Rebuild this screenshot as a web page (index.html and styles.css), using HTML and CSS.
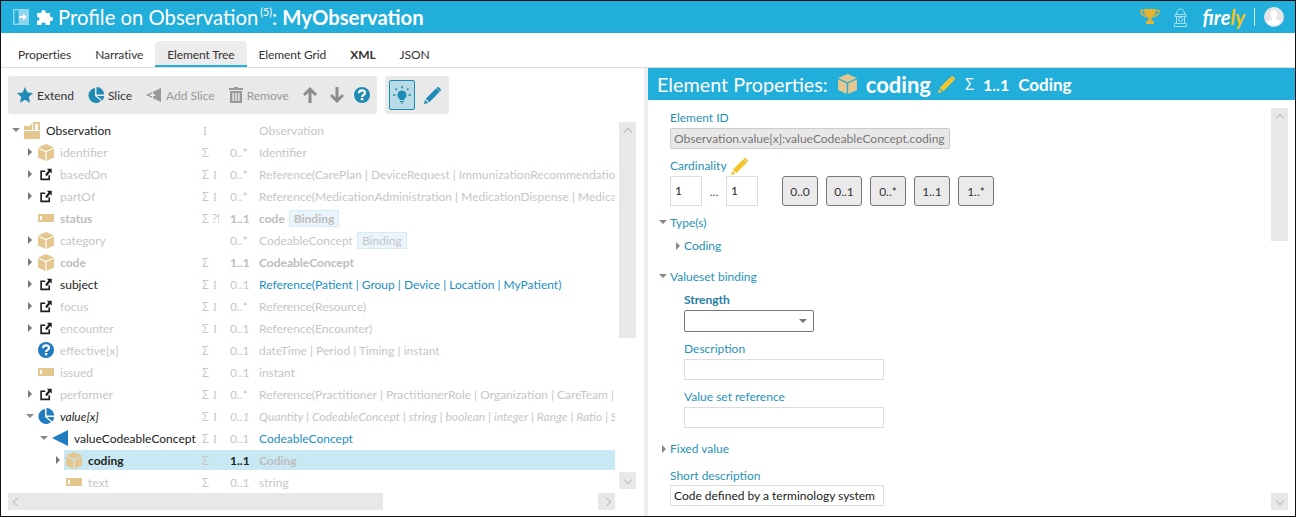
FILE: index.html
```html
<!doctype html>
<html>
<head>
	<meta name="viewport" content="width=device-width, initial-scale=1.0">
	<title>Profile on Observation: MyObservation</title>
	<link rel="stylesheet" href="styles.css">
</head>
<body>

<svg class="defs" width="0" height="0">
	<symbol id="i-box" viewBox="0 0 16 17">
		<path fill="#e3c78f" d="M8 0l8 3.4L8 7 0 3.4z"/>
		<path fill="#e3c78f" d="M0 4.6l7.4 3.3V17L0 13.6z"/>
		<path fill="#e3c78f" d="M16 4.6L8.6 7.9V17l7.4-3.4z"/>
	</symbol>
	<symbol id="i-bar" viewBox="0 0 16 8">
		<path fill="#e3c78f" d="M0 0h16v8H0z"/>
		<path fill="#fff" d="M2 2h2v4H2z"/>
	</symbol>
	<symbol id="i-ref" viewBox="0 0 16 16">
		<path fill="none" stroke="#1c1c1c" stroke-width="2" d="M7 4H2v10h10V9"/>
		<path fill="#1c1c1c" d="M9 1h6v6l-2-2-4 5-2-2 4-5z"/>
	</symbol>
	<symbol id="i-folder" viewBox="0 0 16 17">
		<path fill="#e3c78f" d="M0 4h6l1-2h1v6H0zM0 9h16v8H0z"/>
		<path fill="#e3c78f" d="M9 0h7v8h-2V2h-3v6H9z"/>
	</symbol>
	<symbol id="i-help" viewBox="0 0 16 16">
		<circle cx="8" cy="8" r="8" fill="currentColor"/>
		<path fill="none" stroke="#fff" stroke-width="2.2" d="M5 6.2C5 4.4 6.3 3.4 8 3.4s3 1 3 2.5c0 2-3 2-3 4.2"/>
		<path fill="#fff" d="M6.8 11h2.5v2.3H6.8z"/>
	</symbol>
	<symbol id="i-pie" viewBox="0 0 16 16">
		<path fill="currentColor" d="M7 1v8l6 5A7.5 7.5 0 1 1 7 1z"/>
		<path fill="currentColor" d="M8.5 0A7.5 7.5 0 0 1 16 7.5H8.5z"/>
		<path fill="currentColor" d="M9 9h7c0 1.700-.6 3.300-1.700 4.500z"/>
	</symbol>
	<symbol id="i-slice" viewBox="0 0 16 16">
		<path fill="currentColor" d="M16 0v16L0 8z"/>
	</symbol>
	<symbol id="i-pencil" viewBox="0 0 16 16">
		<path fill="currentColor" d="M11.500 1.200l3.300 3.300L5 14.300 1.700 11zM0 16l1-4 3 3z"/>
		<path fill="currentColor" d="M12.400.4c.6-.5 1.300-.5 1.800 0l1.400 1.400c.5.5.5 1.200 0 1.800l-.6.6-3.200-3.200z"/>
	</symbol>
</svg>

<div class="window">

	<header class="topbar">
		<svg class="top-panel" viewBox="0 0 16 16" width="16" height="16">
			<path fill="#8fd6ec" d="M0 0h16v16H0z"/>
			<path fill="#22aedb" d="M1.500 1.500h4v13h-4z"/>
			<path fill="#fff" d="M6 7h4V4.500L14 8l-4 3.500V9H6z"/>
		</svg>
		<svg class="top-puzzle" viewBox="0 0 16 16" width="16" height="16">
			<path fill="#fff" d="M0 4h4.500C4 2.500 5 1 6.500 1S9 2.500 8.500 4H13v4c1.500-.5 3 .3 3 2s-1.500 2.500-3 2v4H8.500c.5-1.500-.5-2.500-2-2.500s-2.500 1-2 2.500H0v-4.500c1.500.5 2.500-.5 2.500-1.500S1.500 7.500 0 8z"/>
		</svg>
		<h1 class="title">Profile on Observation<sup>(5)</sup>: <b>MyObservation</b></h1>
		<div class="top-right">
			<svg viewBox="0 0 20 16" width="20" height="16">
				<path fill="none" stroke="#e6b32e" stroke-width="1.500" d="M4 1.500H1c0 3 1 5 5 6M16 1.500h3c0 3-1 5-5 6"/>
				<path fill="#e6b32e" d="M4 0h12c0 5-2 8-4.500 9v3H14v3H6v-3h2.500V9C6 8 4 5 4 0z"/>
			</svg>
			<svg class="hydrant" viewBox="0 0 15 20" width="15" height="20">
				<path fill="none" stroke="#a6dff0" d="M3.500 7c0-3 1.500-5 4-5s4 2 4 5M2 7.500h11v2H2zM3.500 9.500h8v7h-8zM1.500 16.500h12v3h-12z"/>
				<circle cx="7.500" cy="12.500" r="2" fill="none" stroke="#a6dff0"/>
			</svg>
			<span class="firely">fire<i>ly</i></span>
			<span class="top-sep"></span>
			<svg viewBox="0 0 20 20" width="20" height="20">
				<circle cx="10" cy="10" r="10" fill="#e6e6e6"/>
				<path fill="#fff" d="M10 3c2.300 0 3.500 1.800 3.500 4 0 1.800-.7 3.200-1.500 4v1.500c2 .7 4 1.500 5 3A10 10 0 0 1 3 15.500c1-1.500 3-2.300 5-3V11c-.8-.8-1.500-2.200-1.500-4 0-2.200 1.200-4 3.500-4z"/>
			</svg>
		</div>
	</header>

	<nav class="tabs">
		<a class="tab">Properties</a>
		<a class="tab">Narrative</a>
		<a class="tab active">Element Tree</a>
		<a class="tab">Element Grid</a>
		<a class="tab strong">XML</a>
		<a class="tab">JSON</a>
	</nav>

	<div class="panes">

		<section class="pane-left">
			<div class="toolbars">
				<div class="toolbar main-tools">
					<span class="tool"><svg width="16" height="16" viewBox="0 0 16 16"><path fill="#1f8ab3" d="M8 0l2.400 5.400 5.600.6-4.200 3.900 1.200 5.800L8 12.800l-5 2.900 1.200-5.800L0 6l5.600-.6z"/></svg>Extend</span>
					<span class="tool"><svg class="blue" width="16" height="16"><use href="#i-pie"/></svg>Slice</span>
					<span class="tool off"><svg width="16" height="16" viewBox="0 0 16 16"><path fill="#999" d="M15 1v14L0 8z"/><path fill="#e9e9e9" d="M9 7H7V5H6v2H4v2h2v2h1V9h2z"/></svg>Add Slice</span>
					<span class="tool off"><svg width="14" height="16" viewBox="0 0 14 16"><path fill="#999" d="M5 0h4v1h5v2H0V1h5zM1 4h12v12H1zM3.500 6v8h1.500V6zM6.300 6v8h1.500V6zM9 6v8h1.500V6z" fill-rule="evenodd"/></svg>Remove</span>
					<svg class="move" width="14" height="16" viewBox="0 0 14 16"><path fill="#8c8c8c" d="M7 0l7 7-2 2-3.500-3.500V16h-3V5.500L2 9 0 7z"/></svg>
					<svg class="move" width="14" height="16" viewBox="0 0 14 16"><path fill="#8c8c8c" d="M7 16L0 9l2-2 3.500 3.500V0h3v10.500L12 7l2 2z"/></svg>
					<svg class="move blue" width="16" height="16"><use href="#i-help"/></svg>
				</div>
				<div class="toolbar side-tools">
					<span class="toggle">
						<svg width="18" height="18" viewBox="0 0 18 18">
							<path fill="none" stroke="#1f8ab3" stroke-width="1.500" d="M9 0v2.500M2.500 2.500l1.500 1.500M15.500 2.500L14 4M0 9h2.500M15.500 9H18"/>
							<path fill="#1f8ab3" d="M9 4.500a4.500 4.500 0 0 1 2.500 8.200V14h-5v-1.300A4.500 4.500 0 0 1 9 4.500zM7 15h4v1H7zM8 16.500h2v1H8z"/>
						</svg>
					</span>
					<svg class="blue" width="17" height="17"><use href="#i-pencil"/></svg>
				</div>
			</div>

			<div class="tree-wrap">
				<div class="tree">
					<div class="row dark">
						<span class="name" style="padding-left: 0"><span class="arr down"></span><svg class="ico" height="17"><use href="#i-folder"/></svg><span>Observation</span></span>
						<span class="flags"><em>I</em></span><span class="card"></span><span class="type">Observation</span>
					</div>
					<div class="row">
						<span class="name" style="padding-left: 14px"><span class="arr closed"></span><svg class="ico" height="17"><use href="#i-box"/></svg><span>identifier</span></span>
						<span class="flags">&Sigma;</span><span class="card">0..*</span><span class="type">Identifier</span>
					</div>
					<div class="row">
						<span class="name" style="padding-left: 14px"><span class="arr closed"></span><svg class="ico" height="13"><use href="#i-ref"/></svg><span>basedOn</span></span>
						<span class="flags">&Sigma; <em>I</em></span><span class="card">0..*</span><span class="type">Reference(CarePlan | DeviceRequest | ImmunizationRecommendation | MedicationRequest)</span>
					</div>
					<div class="row">
						<span class="name" style="padding-left: 14px"><span class="arr closed"></span><svg class="ico" height="13"><use href="#i-ref"/></svg><span>partOf</span></span>
						<span class="flags">&Sigma; <em>I</em></span><span class="card">0..*</span><span class="type">Reference(MedicationAdministration | MedicationDispense | MedicationStatement)</span>
					</div>
					<div class="row bold">
						<span class="name" style="padding-left: 14px"><span class="arr"></span><svg class="ico" height="8"><use href="#i-bar"/></svg><span>status</span></span>
						<span class="flags">&Sigma; ?!</span><span class="card">1..1</span><span class="type">code <span class="badge">Binding</span></span>
					</div>
					<div class="row">
						<span class="name" style="padding-left: 14px"><span class="arr closed"></span><svg class="ico" height="17"><use href="#i-box"/></svg><span>category</span></span>
						<span class="flags"></span><span class="card">0..*</span><span class="type">CodeableConcept <span class="badge">Binding</span></span>
					</div>
					<div class="row bold">
						<span class="name" style="padding-left: 14px"><span class="arr closed"></span><svg class="ico" height="17"><use href="#i-box"/></svg><span>code</span></span>
						<span class="flags">&Sigma;</span><span class="card">1..1</span><span class="type">CodeableConcept</span>
					</div>
					<div class="row dark">
						<span class="name" style="padding-left: 14px"><span class="arr closed"></span><svg class="ico" height="13"><use href="#i-ref"/></svg><span>subject</span></span>
						<span class="flags">&Sigma; <em>I</em></span><span class="card">0..1</span><span class="type link">Reference(Patient | Group | Device | Location | MyPatient)</span>
					</div>
					<div class="row">
						<span class="name" style="padding-left: 14px"><span class="arr closed"></span><svg class="ico" height="13"><use href="#i-ref"/></svg><span>focus</span></span>
						<span class="flags">&Sigma; <em>I</em></span><span class="card">0..*</span><span class="type">Reference(Resource)</span>
					</div>
					<div class="row">
						<span class="name" style="padding-left: 14px"><span class="arr closed"></span><svg class="ico" height="13"><use href="#i-ref"/></svg><span>encounter</span></span>
						<span class="flags">&Sigma; <em>I</em></span><span class="card">0..1</span><span class="type">Reference(Encounter)</span>
					</div>
					<div class="row">
						<span class="name" style="padding-left: 14px"><span class="arr"></span><svg class="ico help" height="16"><use href="#i-help"/></svg><span>effective[x]</span></span>
						<span class="flags">&Sigma;</span><span class="card">0..1</span><span class="type">dateTime | Period | Timing | instant</span>
					</div>
					<div class="row">
						<span class="name" style="padding-left: 14px"><span class="arr"></span><svg class="ico" height="8"><use href="#i-bar"/></svg><span>issued</span></span>
						<span class="flags">&Sigma;</span><span class="card">0..1</span><span class="type">instant</span>
					</div>
					<div class="row">
						<span class="name" style="padding-left: 14px"><span class="arr closed"></span><svg class="ico" height="13"><use href="#i-ref"/></svg><span>performer</span></span>
						<span class="flags">&Sigma; <em>I</em></span><span class="card">0..*</span><span class="type">Reference(Practitioner | PractitionerRole | Organization | CareTeam | Patient)</span>
					</div>
					<div class="row dark ital">
						<span class="name" style="padding-left: 14px"><span class="arr down"></span><svg class="ico help" height="16"><use href="#i-pie"/></svg><span>value[x]</span></span>
						<span class="flags">&Sigma; <em>I</em></span><span class="card">0..1</span><span class="type">Quantity | CodeableConcept | string | boolean | integer | Range | Ratio | Sampled</span>
					</div>
					<div class="row dark">
						<span class="name" style="padding-left: 28px"><span class="arr down"></span><svg class="ico help" height="16"><use href="#i-slice"/></svg><span>valueCodeableConcept</span></span>
						<span class="flags">&Sigma; <em>I</em></span><span class="card">0..1</span><span class="type link">CodeableConcept</span>
					</div>
					<div class="row dark bold sel">
						<span class="name" style="padding-left: 42px"><span class="arr closed"></span><svg class="ico" height="17"><use href="#i-box"/></svg><span>coding</span></span>
						<span class="flags">&Sigma;</span><span class="card">1..1</span><span class="type">Coding</span>
					</div>
					<div class="row">
						<span class="name" style="padding-left: 42px"><span class="arr"></span><svg class="ico" height="8"><use href="#i-bar"/></svg><span>text</span></span>
						<span class="flags">&Sigma;</span><span class="card">0..1</span><span class="type">string</span>
					</div>
				</div>
				<div class="vscroll tree-v">
					<div class="thumb tree-thumb"><span class="chev up"></span></div>
					<div class="sbtn"><span class="chev dn"></span></div>
				</div>
				<div class="hscroll">
					<div class="hthumb"><span class="chev lf"></span></div>
					<div class="sbtn"><span class="chev rt"></span></div>
				</div>
			</div>
		</section>

		<div class="divider"></div>

		<section class="pane-right">
			<div class="props-head">
				<span class="props-title">Element Properties:</span>
				<svg class="props-box" width="19" height="20"><use href="#i-box"/></svg>
				<b class="props-name">coding</b>
				<svg class="yellow props-pen" width="17" height="17"><use href="#i-pencil"/></svg>
				<span class="props-sigma">&Sigma;</span>
				<b class="props-card">1..1</b>
				<b class="props-type">Coding</b>
			</div>
			<div class="props-wrap">
				<div class="props">
					<label class="lbl">Element ID</label>
					<div class="field ro">Observation.value[x]:valueCodeableConcept.coding</div>

					<label class="lbl card-lbl">Cardinality <svg class="yellow" width="17" height="17"><use href="#i-pencil"/></svg></label>
					<div class="card-row">
						<span class="num">1</span><span class="dots">...</span><span class="num">1</span>
						<span class="card-btns">
							<button class="cbtn">0..0</button>
							<button class="cbtn">0..1</button>
							<button class="cbtn">0..*</button>
							<button class="cbtn">1..1</button>
							<button class="cbtn">1..*</button>
						</span>
					</div>

					<div class="sec sec-types"><span class="sarr open"></span>Type(s)</div>
					<div class="sec sec-sub"><span class="sarr shut"></span>Coding</div>

					<div class="sec sec-binding"><span class="sarr open"></span>Valueset binding</div>
					<div class="sub">
						<label class="lbl strength">Strength</label>
						<div class="select"><span class="select-arr"></span></div>
						<label class="lbl sub-lbl">Description</label>
						<div class="field wide"></div>
						<label class="lbl sub-lbl">Value set reference</label>
						<div class="field wide"></div>
					</div>

					<div class="sec sec-fixed"><span class="sarr shut"></span>Fixed value</div>
					<label class="lbl short-lbl">Short description</label>
					<div class="field short">Code defined by a terminology system</div>
				</div>
				<div class="vscroll props-v">
					<div class="thumb props-thumb"><span class="chev up"></span></div>
					<div class="sbtn"><span class="chev dn"></span></div>
				</div>
			</div>
		</section>

	</div>
</div>

</body>
</html>
```

FILE: styles.css
```css
* {
	box-sizing: border-box;
}
body {
	margin: 0;
	background: #fff;
	font-family: Lato, "Open Sans", sans-serif;
	font-size: 12px;
	color: #222;
}
.defs {
	position: absolute;
}
.window {
	height: 517px;
	border: 1px solid #111;
	overflow: hidden;
	display: flex;
	flex-direction: column;
}

/* top bar */
.topbar {
	height: 32px;
	background: #22aedb;
	display: flex;
	align-items: center;
	padding-left: 12px;
	color: #fff;
	flex: none;
}
.top-puzzle {
	margin-left: 8px;
}
.title {
	margin: 0 0 0 5px;
	font-size: 20.3px;
	font-weight: 400;
	white-space: pre;
}
.title sup {
	font-size: 10.5px;
	line-height: 0;
	vertical-align: 9px;
	margin-left: 2px;
}
.title b {
	font-weight: 700;
}
.top-right {
	margin-left: auto;
	margin-right: 11px;
	display: flex;
	align-items: center;
}
.hydrant {
	margin-left: 13px;
}
.firely {
	margin-left: 15px;
	font-size: 20px;
	font-weight: 700;
	font-style: italic;
}
.firely i {
	color: #f5c518;
}
.top-sep {
	width: 1px;
	height: 18px;
	background: #d8f1f9;
	margin: 0 9px;
}

/* tabs */
.tabs {
	height: 35px;
	flex: none;
	display: flex;
	align-items: flex-end;
	padding-left: 5px;
	border-bottom: 1px solid #ddd;
}
.tab {
	height: 26px;
	padding: 0 12px;
	line-height: 27px;
	letter-spacing: -0.1px;
	color: #333;
	border-bottom: 2px solid transparent;
	white-space: nowrap;
}
.tab.active {
	background: #ececec;
	border-radius: 5px 5px 0 0;
	border-bottom-color: #22aedb;
}
.tab.strong {
	font-weight: 700;
}

.panes {
	flex: 1;
	display: flex;
	min-height: 0;
}

/* left pane */
.pane-left {
	width: 643px;
	flex: none;
	padding: 8px 0 0 7px;
}
.toolbars {
	display: flex;
	gap: 8px;
	height: 38px;
}
.toolbar {
	background: #e9e9e9;
	border-radius: 3px;
	display: flex;
	align-items: center;
}
.main-tools {
	width: 369px;
	padding-left: 9px;
}
.side-tools {
	width: 64px;
	padding-left: 4px;
}
.tool {
	display: flex;
	align-items: center;
	gap: 4px;
	margin-right: 14px;
	color: #333;
	white-space: nowrap;
}
.tool.off {
	color: #999;
}
.move {
	flex: none;
	margin-right: 13px;
}
.move.blue {
	margin-left: -3px;
}
.blue {
	color: #1f8ab3;
}
.yellow {
	color: #f4c52d;
}
.toggle {
	width: 26px;
	height: 30px;
	background: #b8dbe6;
	border: 1px solid #1f8ab3;
	border-radius: 2px;
	display: flex;
	align-items: center;
	justify-content: center;
	margin-right: 9px;
}

.tree-wrap {
	margin-top: 5px;
	display: grid;
	grid-template-columns: 607px 17px;
	grid-template-rows: 374px 17px;
	column-gap: 4px;
}
.tree {
	overflow: hidden;
}
.row {
	height: 22px;
	display: grid;
	grid-template-columns: 194px 28px 29px 356px;
	align-items: center;
	white-space: nowrap;
	color: #c6c6c6;
}
.row.bold {
	font-weight: 700;
}
.row.bold .name, .row.bold .type, .row.bold .card {
	color: #bdbdbd;
}
.row.ital .name, .row.ital .type, .row.ital .card {
	font-style: italic;
}
.row.dark .name {
	color: #222;
}
.row.sel {
	background: linear-gradient(to right, transparent 56px, #c8e9f3 56px) no-repeat center / 100% 20px;
}
.row.sel .card {
	color: #222;
}
.name {
	display: flex;
	align-items: center;
}
.arr {
	width: 16px;
	flex: none;
	display: flex;
	justify-content: center;
}
.arr.closed::before {
	content: "";
	border-left: 4px solid #777;
	border-top: 4px solid transparent;
	border-bottom: 4px solid transparent;
}
.arr.down::before {
	content: "";
	border-top: 4px solid #888;
	border-left: 4px solid transparent;
	border-right: 4px solid transparent;
}
.ico {
	width: 16px;
	flex: none;
	margin-right: 6px;
}
.ico.help {
	color: #1f7cc0;
}
.flags {
	font-weight: 400;
	font-style: normal;
	color: #c6c6c6;
	font-family: "Open Sans", sans-serif;
	font-size: 12px;
}
.flags em {
	font-family: "Liberation Serif", serif;
	font-style: normal;
	margin-left: 1px;
}
.type {
	overflow: hidden;
}
.type.link {
	color: #1b8fc0;
}
.badge {
	display: inline-block;
	height: 17px;
	line-height: 15px;
	padding: 0 4px;
	background: #e9f5fb;
	border: 1px solid #d8ecf5;
	margin-left: 1px;
}

/* scrollbars */
.vscroll {
	display: flex;
	flex-direction: column;
	justify-content: space-between;
	align-items: stretch;
}
.tree-v {
	margin-top: 3px;
	margin-bottom: 4px;
}
.tree-thumb {
	height: 216px;
}
.thumb, .sbtn, .hthumb {
	background: #e8e8e8;
	display: flex;
	align-items: center;
	justify-content: center;
}
.thumb {
	padding-top: 5px;
	align-items: flex-start;
}
.sbtn {
	height: 17px;
	width: 17px;
}
.hscroll {
	display: flex;
	justify-content: space-between;
}
.hthumb {
	width: 375px;
	justify-content: flex-start;
	padding-left: 6px;
}
.chev {
	width: 6px;
	height: 6px;
	border-left: 1px solid #bbb;
	border-top: 1px solid #bbb;
	display: block;
}
.chev.up {
	transform: translateY(2px) rotate(45deg);
}
.chev.dn {
	transform: translateY(-1px) rotate(225deg);
}
.chev.lf {
	transform: rotate(-45deg);
}
.chev.rt {
	transform: rotate(135deg);
}

.divider {
	width: 4px;
	flex: none;
	background: #eee;
}

/* right pane */
.pane-right {
	flex: 1;
	min-width: 0;
	display: flex;
	flex-direction: column;
}
.props-head {
	height: 32px;
	background: #22aedb;
	color: #fff;
	display: flex;
	align-items: center;
	padding-left: 9px;
	flex: none;
}
.props-title {
	font-size: 19.8px;
}
.props-box {
	margin-left: 10px;
}
.props-name {
	margin-left: 9px;
	font-size: 22px;
}
.props-pen {
	margin-left: 7px;
}
.props-sigma {
	margin-left: 10px;
	font-size: 16px;
	font-family: "Open Sans", sans-serif;
}
.props-card {
	margin-left: 9px;
	font-size: 16px;
}
.props-type {
	margin-left: 9px;
	font-size: 17px;
}
.props-wrap {
	flex: 1;
	min-height: 0;
	display: flex;
	justify-content: space-between;
	padding-right: 7px;
}
.props {
	padding: 9px 0 0 22px;
}
.lbl {
	display: block;
	height: 18px;
	line-height: 18px;
	color: #2792b8;
}
.field {
	height: 21px;
	line-height: 19px;
	border: 1px solid #ddd;
	padding: 0 3px;
	white-space: nowrap;
}
.field.ro {
	width: 280px;
	margin-top: 1px;
	background: #e8e8e8;
	border-color: #ccc;
	color: #777;
	border-radius: 2px;
}
.field.wide {
	width: 200px;
	margin-top: 1px;
}
.field.short {
	width: 214px;
	line-height: 20px;
	color: #222;
}
.card-lbl {
	margin-top: 8px;
	display: flex;
	align-items: center;
	gap: 4px;
}
.card-row {
	margin-top: 1px;
	display: flex;
	align-items: center;
}
.num {
	width: 32px;
	height: 30px;
	line-height: 28px;
	border: 1px solid #ddd;
	padding-left: 4px;
}
.dots {
	width: 24px;
	text-align: center;
	color: #555;
}
.card-btns {
	margin-left: 24px;
	display: flex;
	gap: 8px;
}
.cbtn {
	width: 36px;
	height: 30px;
	padding: 0;
	background: #eaeaea;
	border: 1px solid #777;
	border-radius: 3px;
	font-family: inherit;
	font-size: 12px;
	color: #333;
}
.sec {
	height: 18px;
	line-height: 18px;
	color: #2792b8;
	position: relative;
}
.sarr {
	position: absolute;
}
.sarr.open {
	left: -11px;
	top: 6px;
	border-top: 4px solid #888;
	border-left: 4px solid transparent;
	border-right: 4px solid transparent;
}
.sarr.shut {
	left: -8px;
	top: 5px;
	border-left: 4px solid #888;
	border-top: 4px solid transparent;
	border-bottom: 4px solid transparent;
}
.sec-types {
	margin-top: 8px;
}
.sec-sub {
	margin: 5px 0 0 14px;
}
.sec-binding {
	margin-top: 13px;
}
.sub {
	margin-left: 14px;
}
.strength {
	margin-top: 5px;
	font-weight: 700;
	color: #1f7ea3;
}
.select {
	width: 130px;
	height: 22px;
	border: 1px solid #777;
	border-radius: 2px;
	position: relative;
	margin-top: 1px;
}
.select-arr {
	position: absolute;
	right: 6px;
	top: 8px;
	border-top: 4px solid #777;
	border-left: 4px solid transparent;
	border-right: 4px solid transparent;
}
.sub-lbl {
	margin-top: 8px;
}
.sec-fixed {
	margin-top: 12px;
}
.short-lbl {
	margin-top: 9px;
}
.props-v {
	width: 17px;
	flex: none;
	margin-top: 8px;
	margin-bottom: 6px;
}
.props-thumb {
	height: 133px;
}
```
